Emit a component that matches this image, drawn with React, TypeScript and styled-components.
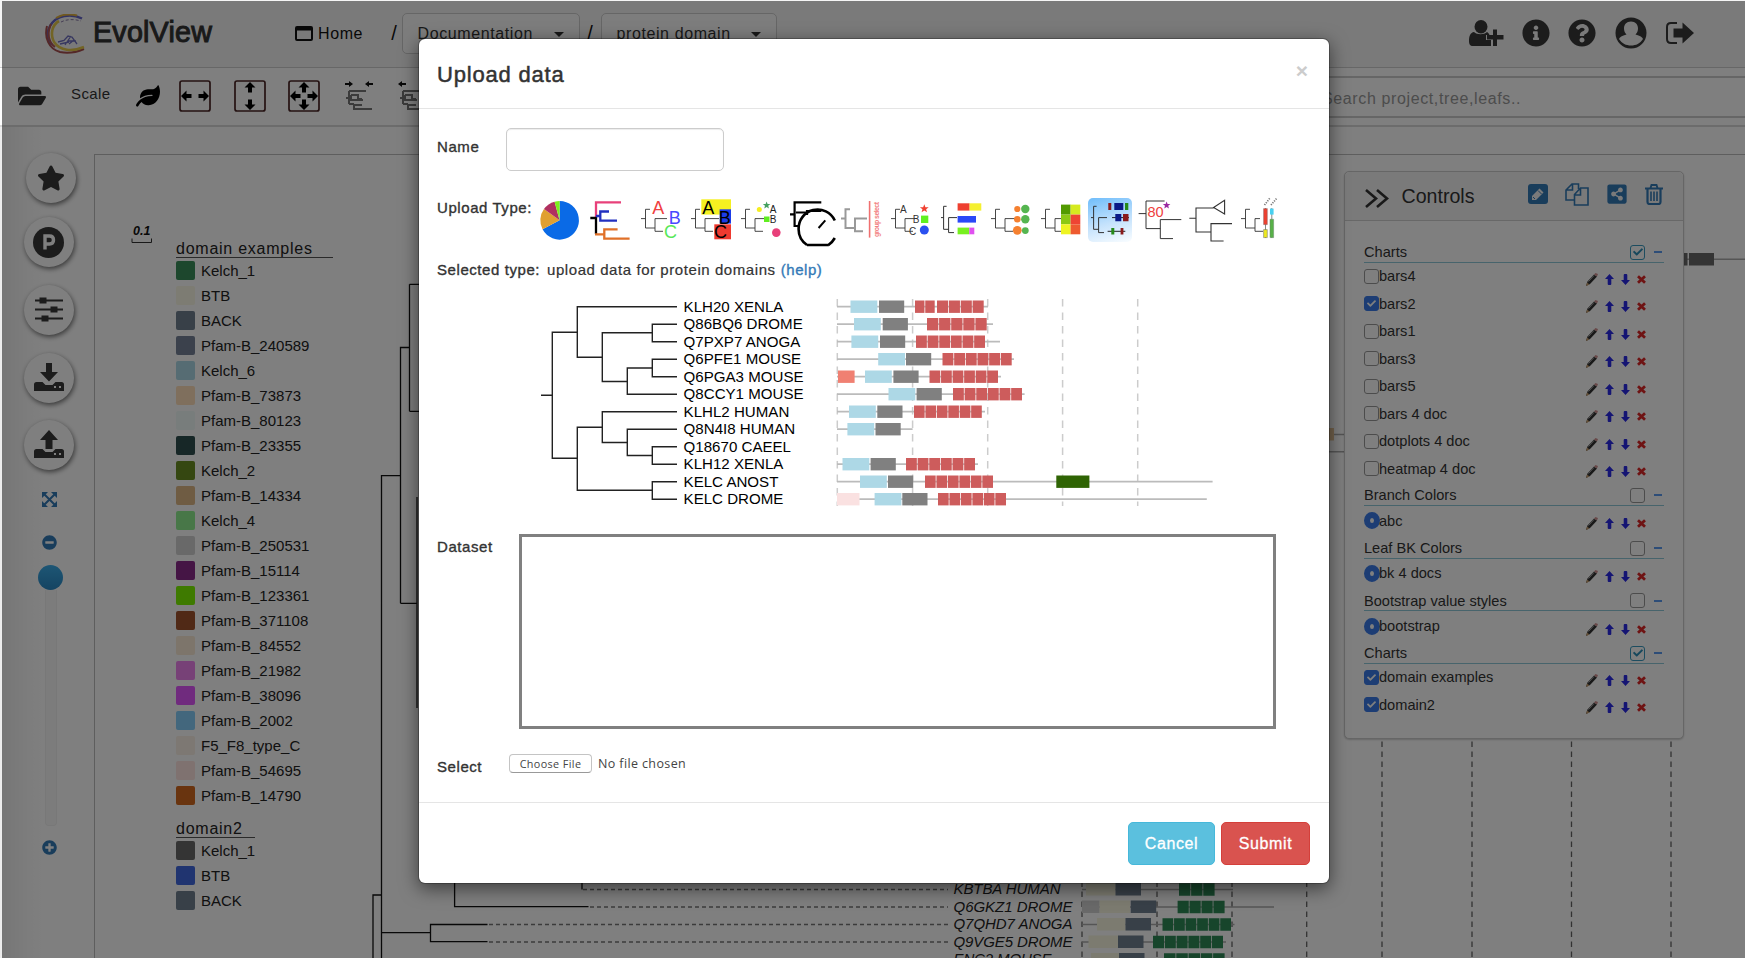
import React from "react";
import styled, { createGlobalStyle, css } from "styled-components";
import {
  FaCheck,
  FaFolderOpen,
  FaInfoCircle,
  FaLeaf,
  FaQuestionCircle,
  FaShareAltSquare,
  FaStar,
  FaMinusCircle,
  FaPlusCircle,
} from "react-icons/fa";

const GlobalStyle = createGlobalStyle`
  * { box-sizing: border-box; }
  body {
    margin: 0;
    background: #fff;
    color: #333;
    font-family: "Liberation Sans", Arial, Helvetica, sans-serif;
    overflow: hidden;
  }
  svg { display: block; flex: none; }
`;

/* ---------- page shell ---------- */

const Page = styled.div`
  position: relative;
  display: flex;
  flex-direction: column;
  width: 1745px;
  height: 958px;
  overflow: hidden;
`;

const Header = styled.header`
  display: flex;
  align-items: center;
  height: 68px;
  padding: 0 51px 0 44px;
  background: #f5f5f5;
  border-bottom: 1px solid #cfcfcf;
  letter-spacing: 0.6px;
  font-size: 16px;
`;

const Brand = styled.div`
  width: 202px;
  margin-left: 6px;
  font-size: 28.7px;
  letter-spacing: 0.2px;
  -webkit-text-stroke: 1px #333;
  padding-bottom: 2px;
`;

const HomeLink = styled.a`
  display: flex;
  align-items: center;
  gap: 5px;
  width: 91.5px;
  color: #111;
`;

const Slash = styled.span<{ $wide?: boolean }>`
  width: ${(p) => (p.$wide ? "15px" : "21px")};
  font-size: 20px;
  text-align: center;
  letter-spacing: 0;
  color: #111;
`;

const Crumb = styled.div<{ $width: number }>`
  display: flex;
  align-items: center;
  justify-content: space-between;
  width: ${(p) => p.$width}px;
  height: 41px;
  padding: 1px 15px 0 15px;
  border: 1px solid #ccc;
  border-radius: 5px;
  background: #fbfbfb;
`;

const Caret = styled.i`
  border: 5px solid transparent;
  border-top-color: #333;
  border-bottom: 0;
`;

const HeaderIcons = styled.div`
  display: flex;
  align-items: center;
  margin-left: auto;
  padding-bottom: 2px;
  color: #383838;
`;

const Gap = styled.span<{ $w: number }>`
  width: ${(p) => p.$w}px;
`;

const Toolbar = styled.div`
  display: flex;
  align-items: center;
  height: 59px;
  padding: 0 0 2px 18px;
  background: #fff;
  border-bottom: 2px solid #d8d8d8;
  color: #333;
`;

const ScaleLabel = styled.span`
  width: 65px;
  margin-left: 25px;
  padding-bottom: 4px;
  font-size: 15px;
  letter-spacing: 0.4px;
`;

const SearchBox = styled.div`
  display: flex;
  align-items: center;
  width: 450px;
  height: 42px;
  margin: 2px 0 0 auto;
  padding: 4px 0 0 25px;
  border: 2px solid #ccc;
  border-right: 0;
  color: #999;
  font-size: 16px;
  letter-spacing: 0.62px;
`;

const Workspace = styled.div`
  display: flex;
  flex: 1;
  min-height: 0;
`;

const Sidebar = styled.aside`
  display: flex;
  flex-direction: column;
  align-items: center;
  width: 94px;
  padding: 26px 0 0 3px;
  background: linear-gradient(90deg, #ececec, #fafafa 28px, #fff 45px);
  color: #337ab7;
`;

const RoundButton = styled.div<{ $shift?: number; $gap: number }>`
  display: flex;
  flex: none;
  align-items: center;
  justify-content: center;
  width: 50px;
  height: 50px;
  margin-bottom: ${(p) => p.$gap}px;
  margin-left: ${(p) => p.$shift || 0}px;
  border-radius: 50%;
  background: #fff;
  color: #383838;
  box-shadow: 1px 2px 5px rgba(0, 0, 0, 0.55);
`;

const ZoomControl = styled.div`
  display: flex;
  flex-direction: column;
  align-items: center;
  margin-left: 2px;
`;

const ZoomFit = styled.span`
  margin-bottom: 28px;
`;

const SliderHandle = styled.div`
  flex: none;
  width: 25px;
  height: 25px;
  margin: 15px 0 0 2px;
  border-radius: 50%;
  background: linear-gradient(#3badea, #2a88c4);
`;

const SliderTrack = styled.div`
  flex: none;
  width: 12px;
  height: 236px;
  margin: 0 0 14px 2px;
  border: 1px solid #f0f0f0;
  border-top: 0;
  border-radius: 0 0 4px 4px;
  background: #f9f9f9;
`;

const Canvas = styled.main`
  position: relative;
  flex: 1;
  margin-top: 27px;
  border-top: 1px solid #bdbdbd;
  border-left: 1px solid #bdbdbd;
`;

const CanvasDrawing = styled.svg`
  position: absolute;
  left: 0;
  top: 0;
`;

/* ---------- legend ---------- */

const Legend = styled.div`
  position: absolute;
  left: 81px;
  top: 83px;
  color: #222;
  font-size: 15px;
`;

const LegendTitle = styled.div<{ $width: number }>`
  width: ${(p) => p.$width}px;
  height: 20px;
  margin-bottom: 3px;
  border-bottom: 1px solid #555;
  font-size: 16px;
  line-height: 21px;
  letter-spacing: 0.75px;
`;

const LegendRow = styled.div`
  display: flex;
  align-items: center;
  gap: 6px;
  height: 19px;
  margin-bottom: 6px;
`;

const Swatch = styled.span<{ $color: string }>`
  width: 19px;
  height: 19px;
  border-radius: 2px;
  background: ${(p) => p.$color};
`;

const LegendGroup = styled.section`
  margin-bottom: 13px;
`;

const domainLegend: [string, string][] = [
  ["Kelch_1", "#3a8e5a"],
  ["BTB", "#fbf9e6"],
  ["BACK", "#708090"],
  ["Pfam-B_240589", "#778399"],
  ["Kelch_6", "#add8e6"],
  ["Pfam-B_73873", "#ffdfba"],
  ["Pfam-B_80123", "#f0fbf8"],
  ["Pfam-B_23355", "#2f4f4f"],
  ["Kelch_2", "#6b8e23"],
  ["Pfam-B_14334", "#deb887"],
  ["Kelch_4", "#90ee90"],
  ["Pfam-B_250531", "#d3d3d3"],
  ["Pfam-B_15114", "#8b2a8b"],
  ["Pfam-B_123361", "#7cf400"],
  ["Pfam-B_371108", "#a0522d"],
  ["Pfam-B_84552", "#faebd7"],
  ["Pfam-B_21982", "#ee82ee"],
  ["Pfam-B_38096", "#e056fd"],
  ["Pfam-B_2002", "#87cefa"],
  ["F5_F8_type_C", "#faf0e6"],
  ["Pfam-B_54695", "#ffe4e1"],
  ["Pfam-B_14790", "#d2691e"],
];

const domain2Legend: [string, string][] = [
  ["Kelch_1", "#696969"],
  ["BTB", "#4169e1"],
  ["BACK", "#708090"],
];

/* ---------- controls panel ---------- */

const Panel = styled.section`
  position: absolute;
  left: 1249px;
  top: 16px;
  width: 340px;
  height: 568px;
  border: 1px solid #ccc;
  border-radius: 5px;
  background: #fff;
  box-shadow: 0 1px 2px rgba(0, 0, 0, 0.2);
  color: #333;
`;

const PanelHead = styled.div`
  display: flex;
  align-items: center;
  height: 49px;
  padding: 0 20px 4px 20px;
  border-bottom: 1px solid #d0d0d0;
  border-radius: 5px 5px 0 0;
  background: #f5f5f5;
  font-size: 19.6px;

  & > svg {
    margin-top: 8px;
  }
`;

const PanelTitle = styled.span`
  flex: 1;
  margin-left: 12.5px;
  padding-top: 5px;
`;

const PanelIcons = styled.div`
  display: flex;
  align-items: center;
  gap: 17px;
  color: #337ab7;
`;

const PanelBody = styled.div`
  width: 300px;
  margin: 18.5px 0 0 19px;
  font-size: 14.6px;
`;

const GroupHead = styled.div`
  display: flex;
  align-items: center;
  height: 23.3px;
  padding-top: 3px;
  border-bottom: 1px solid #8fc8d8;
`;

const GroupName = styled.span`
  flex: 1;
`;

const Collapse = styled.i`
  width: 8px;
  height: 2px;
  margin: 0 2px 0 9px;
  background: #5b9bf0;
`;

const Box = styled.span<{ $on?: boolean; $outline?: boolean }>`
  display: inline-flex;
  align-items: center;
  justify-content: center;
  width: 15px;
  height: 15px;
  border: 1px solid #999;
  border-radius: 3px;
  background: #fff;
  color: #fff;
  ${(p) =>
    p.$on &&
    (p.$outline
      ? css`
          border-color: #3a9bc0;
          color: #2e8fb8;
        `
      : css`
          border-color: #3a7be8;
          background: #3a7be8;
        `)}
`;

const Radio = styled.span`
  width: 16px;
  height: 17px;
  margin-right: -1px;
  border: 6px solid #3a7be8;
  border-radius: 50%;
  background: #fff;
`;

const ItemRow = styled.div<{ $radio?: boolean }>`
  display: flex;
  align-items: center;
  height: ${(p) => (p.$radio ? "29.35px" : "27.5px")};
  padding-bottom: ${(p) => (p.$radio ? "0" : "1px")};
`;

const ItemName = styled.span`
  flex: 1;
`;

const ItemTools = styled.span`
  display: flex;
  align-items: center;
  gap: 7px;
  margin: 6px 18px 0 0;
`;

/* ---------- modal ---------- */

const Backdrop = styled.div`
  position: absolute;
  inset: 1px 0 0 2px;
  background: rgba(0, 0, 0, 0.5);
`;

const Modal = styled.div`
  position: absolute;
  left: 418px;
  top: 38px;
  display: flex;
  flex-direction: column;
  width: 912px;
  height: 846px;
  border: 1px solid rgba(0, 0, 0, 0.25);
  border-radius: 7px;
  background: #fff;
  background-clip: padding-box;
  box-shadow: 0 5px 18px rgba(0, 0, 0, 0.5);
  font-size: 15px;
  letter-spacing: 0.57px;
`;

const ModalHead = styled.div`
  display: flex;
  align-items: center;
  justify-content: space-between;
  height: 70px;
  padding: 2px 21px 0 18px;
  border-bottom: 1px solid #e5e5e5;
  font-size: 22px;
  letter-spacing: 0.8px;
  -webkit-text-stroke: 0.5px #333;
`;

const CloseMark = styled.span`
  padding-bottom: 7px;
  font-size: 21px;
  font-weight: bold;
  letter-spacing: 0;
  color: #ccc;
  -webkit-text-stroke: 0;
`;

const ModalBody = styled.div`
  flex: 1;
  padding: 19px 0 0 18px;
`;

const Field = styled.div<{ $height: number; $after: number }>`
  display: flex;
  height: ${(p) => p.$height}px;
  margin-bottom: ${(p) => p.$after}px;
`;

const Label = styled.label<{ $width: number; $top?: number }>`
  flex: none;
  width: ${(p) => p.$width}px;
  padding-top: ${(p) => p.$top || 0}px;
  line-height: 18px;
  white-space: nowrap;
  -webkit-text-stroke: 0.35px #333;
`;

const TextInput = styled.input`
  width: 218px;
  height: 43px;
  border: 1.5px solid #ccc;
  border-radius: 5px;
  box-shadow: inset 0 1px 1px rgba(0, 0, 0, 0.075);
`;

const TypeStrip = styled.div`
  display: flex;
  gap: 6px;
`;

const TypeIcon = styled.svg<{ $selected?: boolean }>`
  width: 44px;
  height: 44px;
  overflow: visible;
  border-radius: 5px;
  ${(p) =>
    p.$selected &&
    css`
      background: linear-gradient(165deg, #6fbdfb, #c4e2fc 55%, #fafdff);
    `}
`;

const HelpLink = styled.a`
  margin-left: 5px;
  color: #337ab7;
  -webkit-text-stroke: 0.35px #337ab7;
`;

const SelectedText = styled.span`
  line-height: 18px;
  -webkit-text-stroke: 0.2px #333;
`;

const DataArea = styled.textarea`
  width: 757px;
  height: 195px;
  border: 3.5px solid #808080;
  outline: 0;
  resize: none;
`;

const FilePicker = styled.div`
  display: flex;
  align-items: center;
  gap: 6px;
  height: 19px;
  color: #444;
  font-family: "Open Sans", sans-serif;
  font-size: 12.5px;
  letter-spacing: 0.38px;
`;

const FileButton = styled.span`
  width: 83px;
  height: 19px;
  border: 1px solid #c4c4c4;
  border-bottom-color: #999;
  border-radius: 4px;
  font-size: 10.8px;
  line-height: 17px;
  text-align: center;
`;

const ModalFoot = styled.div`
  display: flex;
  justify-content: flex-end;
  gap: 6px;
  height: 81px;
  padding: 19px 19px 0 0;
  border-top: 1px solid #e5e5e5;
`;

const Button = styled.button<{ $kind: "info" | "danger" }>`
  width: ${(p) => (p.$kind === "info" ? 87 : 89)}px;
  height: 43px;
  padding: 0;
  border: 1px solid ${(p) => (p.$kind === "info" ? "#46b8da" : "#d43f3a")};
  border-radius: 5px;
  background: ${(p) => (p.$kind === "info" ? "#5bc0de" : "#d9534f")};
  color: #fff;
  font: 16px "Liberation Sans", Arial, sans-serif;
  letter-spacing: 0.6px;
  -webkit-text-stroke: 0.3px #fff;
`;

/* ---------- drawings ---------- */

const Logo = () => (
  <svg width="43" height="40" viewBox="0 0 43 40" fill="none">
    <path d="M38 4.500C27-1 12 1 6 12C2 19 3 26 8 31" stroke="#6464c8" strokeWidth="2.400" />
    <path d="M33 1.500C25-0.500 17 1 12 4" stroke="#e0b040" strokeWidth="2" />
    <path d="M3 12C0 24 5 35 16 38C25 40 33 38 40 35" stroke="#a85050" strokeWidth="2" />
    <path d="M40 33C28 38 16 37 10 28C6 20 8 11 15 7" stroke="#e5c84a" strokeWidth="2.600" />
    <path d="M7 10C3 18 4 28 11 33" stroke="#b05858" strokeWidth="2" />
    <path d="M17 8C23 5 30 5 37 7" stroke="#8a7aa8" strokeWidth="1" strokeDasharray="3 2" />
    <path d="M14 28L20 26.500L24 22L28 23L33 30M16 30L25 28M25 30L30 26M21 31L27 22M24 27H32" stroke="#7070c0" strokeWidth="1.300" />
  </svg>
);

const UserPlus = () => (
  <svg width="35" height="26" viewBox="0 0 35 26" fill="currentColor">
    <ellipse cx="12" cy="6.800" rx="6.500" ry="6.800" />
    <path d="M5 12C8 15 15 15 18 12C19 12.500 20 13.500 20.500 15H17V20H22V26H4C1 26 0 24 0 21C0 16 1.500 12.500 5 12Z" />
    <path d="M24 9.500H28V15H34.500V19.500H28V26H24V19.500H18V15H24Z" />
  </svg>
);

const Account = () => (
  <svg width="32" height="32" viewBox="0 0 32 32">
    <circle cx="16" cy="16" r="15.500" fill="currentColor" />
    <path d="M16 4.500C11.500 4.500 9 7.500 9 11.500C9 14 10 16 11.500 17.500C7 18.500 4.500 20.500 4 22C7 26.500 11 28.500 16 28.500C21 28.500 25 26.500 28 22C27.500 20.500 25 18.500 20.500 17.500C22 16 23 14 23 11.500C23 7.500 20.500 4.500 16 4.500Z" fill="#f5f5f5" />
  </svg>
);

const SignOut = () => (
  <svg width="28" height="22" viewBox="0 0 28 22">
    <path d="M11 1H5C2.500 1 1 2.500 1 5V17C1 19.500 2.500 21 5 21H11" fill="none" stroke="currentColor" strokeWidth="2" />
    <path d="M7.500 6.500H16.500V0.500L28 11L16.500 21.500V15.500H7.500Z" fill="currentColor" />
  </svg>
);

const WindowIcon = () => (
  <svg width="18" height="15" viewBox="0 0 18 15">
    <path d="M2 0H16Q18 0 18 2V13Q18 15 16 15H2Q0 15 0 13V2Q0 0 2 0ZM2 4.500V13H16V4.500Z" fill="#111" fillRule="evenodd" />
  </svg>
);

const arrowPair = "M1.500 15.500L7 10V13.500H12V17.500H7V21ZM29.500 15.500L24 10V13.500H19V17.500H24V21Z";

const ScaleBox = ({ mode }: { mode: "h" | "v" | "all" }) => (
  <svg width="32" height="32" viewBox="0 0 32 32">
    <rect x="1" y="1" width="30" height="30" rx="2" fill="none" stroke="#4a2424" strokeWidth="1.700" />
    <g fill="#000" transform="translate(0.500 0.500)">
      {mode !== "v" && <path d={arrowPair} />}
      {mode !== "h" && <path d={arrowPair} transform="rotate(90 15.500 15.500)" />}
    </g>
  </svg>
);

const TreeScale = ({ flip }: { flip?: boolean }) => (
  <svg width="30" height="30" viewBox="0 0 30 30">
    <path
      d={flip ? "M0 3L4 0V2H8V4H4V6ZM22 3L26 0V2H30V4H26V6Z" : "M9 3L5 0V2H1V4H5V6ZM21 3L25 0V2H29V4H25V6Z"}
      fill="#111"
    />
    <path d="M2 17H5M5 10V23M5 10H22M5 23H10M7 14H14V18H18M7 14V19H19M10 23V28H28M10 24H18" fill="none" stroke="#777" strokeWidth="2" />
  </svg>
);

const ParkingIcon = () => (
  <svg width="31" height="31" viewBox="0 0 31 31">
    <circle cx="15.500" cy="15.500" r="15.500" fill="currentColor" />
    <path d="M12 22.500V9H16.500Q20.500 9 20.500 13Q20.500 17 16.500 17H12" fill="none" stroke="#fff" strokeWidth="3.400" />
  </svg>
);

const SlidersIcon = () => (
  <svg width="28" height="25" viewBox="0 0 28 25">
    <path d="M0 3.500H28M0 12.500H28M0 21.500H28" stroke="currentColor" strokeWidth="2" />
    <path d="M4.500 0.500h7v6h-7zM15.500 9.500h7v6h-7zM6.500 18.500h7v6h-7z" fill="currentColor" />
  </svg>
);

const DriveIcon = ({ up }: { up?: boolean }) => (
  <svg width="30" height="29" viewBox="0 0 30 29" fill="currentColor">
    <path d={up ? "M15 0L24 10H18.500V19H11.500V10H6Z" : "M12 0H18V9H24L15 18.500L6 9H12Z"} />
    <path d="M2.500 19H8.500L11.500 22H18.500L21.500 19H27.500Q30 19 30 21.500V28H0V21.500Q0 19 2.500 19Z" />
    <path d="M20 23h2v2h-2zM25 23h2v2h-2z" fill="#fff" />
  </svg>
);

const ExpandIcon = () => (
  <svg width="15" height="15" viewBox="0 0 15 15">
    <path d="M0 0H6L0 6ZM9 0H15V6ZM15 9V15H9ZM0 9L6 15H0Z" fill="currentColor" />
    <path d="M2 2L13 13M13 2L2 13" stroke="currentColor" strokeWidth="2" />
  </svg>
);

const DoubleChevron = () => (
  <svg width="24" height="19" viewBox="0 0 24 19" fill="none" stroke="#333" strokeWidth="2.600">
    <path d="M1 1L11 9.500L1 18M12 1L22 9.500L12 18" />
  </svg>
);

const PencilSquare = () => (
  <svg width="20" height="20" viewBox="0 0 20 20">
    <rect width="20" height="20" rx="3" fill="currentColor" />
    <path d="M4 12L11.500 4.500L15.500 8.500L8 16H4Z" fill="#f5f5f5" />
    <path d="M10 6.500L13.500 10M5 13L7 15" stroke="currentColor" strokeWidth="1" />
  </svg>
);

const FilesIcon = () => (
  <svg width="24" height="23" viewBox="0 0 24 23" fill="none" stroke="currentColor" strokeWidth="1.600">
    <path d="M9.500 17H1V7L7 1H13.500V6M7.500 1V7H1" />
    <path d="M9.500 22V11.500L15.500 5H23V22ZM15.500 5V12H9.500" />
  </svg>
);

const TrashIcon = () => (
  <svg width="18" height="21" viewBox="0 0 18 21" fill="none" stroke="currentColor">
    <path d="M0 4.500H18M5.500 4L6.500 1H11.500L12.500 4" strokeWidth="1.900" />
    <path d="M2.500 5V18Q2.500 20 4.500 20H13.500Q15.500 20 15.500 18V5" strokeWidth="2.200" />
    <path d="M6 7.500V17M9 7.500V17M12 7.500V17" strokeWidth="1.600" />
  </svg>
);

const PenIcon = () => (
  <svg width="12" height="13" viewBox="0 0 12 13">
    <path d="M0 13L1.500 8.500L8 1.500L11 3.500L4 11Z" fill="#333" />
    <path d="M2.500 8.500L8 2.500" stroke="#aaa" strokeWidth="1" />
    <path d="M8 1.500L9.500 0L12 1L11 3.500Z" fill="#d09090" />
    <path d="M0 13L1 9.500L3.500 11.500Z" fill="#c9a070" />
  </svg>
);

const MoveIcon = ({ down }: { down?: boolean }) => (
  <svg width="9" height="11" viewBox="0 0 9 11">
    <path
      d="M4.500 0L9 5H6.300V10Q6.300 11 5.300 11H3.700Q2.700 11 2.700 10V5H0Z"
      fill="#2a2ae6"
      transform={down ? "rotate(180 4.500 5.500)" : undefined}
    />
  </svg>
);

const RemoveIcon = () => (
  <svg width="9" height="9" viewBox="0 0 9 9">
    <path d="M1 1.200L8 7.800M8 1.200L1 7.800" stroke="#dc2626" strokeWidth="2.800" />
  </svg>
);

/* Row of protein blocks drawn on the main canvas. */
interface CanvasRow {
  label: string;
  y: number;
  from: number;
  end: number;
  pale: [number, number];
  slate: number;
  green: [number, number, number];
  grey?: [number, number];
}

const canvasRows: CanvasRow[] = [
  { label: "KBTBA HUMAN", y: 889.5, from: 583, end: 1233, pale: [1086, 1115.5], slate: 1115.5, green: [1179, 1214.6, 3] },
  { label: "Q6GKZ1 DROME", y: 907, from: 590, end: 1274, pale: [1099.6, 1130], slate: 1130.7, green: [1177.6, 1224.6, 4], grey: [1082, 1099.6] },
  { label: "Q7QHD7 ANOGA", y: 924.5, from: 489, end: 1234.5, pale: [1097, 1125.5], slate: 1125.5, green: [1162.5, 1231, 6] },
  { label: "Q9VGE5 DROME", y: 942, from: 489, end: 1226, pale: [1088.5, 1118], slate: 1118, green: [1153, 1223, 6] },
  { label: "ENC2 MOUSE", y: 959.5, from: 489, end: 1228, pale: [1091, 1119], slate: 1119, green: [1164, 1224.6, 5] },
];

const Blocks = ({ from, to, n, y, h, color }: { from: number; to: number; n: number; y: number; h: number; color: string }) => {
  const gap = 0.8;
  const step = (to - from + gap) / n;
  return (
    <>
      {Array.from({ length: n }, (_, i) => (
        <rect key={i} x={from + i * step} y={y - h / 2} width={step - gap} height={h} fill={color} />
      ))}
    </>
  );
};

const TreeCanvas = () => (
  <CanvasDrawing width="1650" height="803" viewBox="95 155 1650 803">
    <text x="133" y="235" fontSize="12.500" fontWeight="bold" fontStyle="italic" fill="#111">0.1</text>
    <path d="M132 238.500V242.500H151.500V238.500" fill="none" stroke="#333" />
    <path
      d="M381.500 958V475.700H400.500M400.500 603.300V347.500H409.500M409.500 284.300V411.300M409.500 284.300H430M409.500 411.300H430M400.500 603.300H417M417 497V708M381.500 932.700H430.500M487.500 924.500H430.500V941.700H487.500M373 958V895H381.500M454.600 870V906.700H588.500M582 870V889.500"
      fill="none"
      stroke="#111"
      strokeWidth="1.300"
    />
    {[1082, 1157, 1232, 1306.7, 1382, 1472, 1571.5, 1671].map((x) => (
      <path key={x} d={`M${x} 741.500V958`} stroke="#666" strokeWidth="1.300" strokeDasharray="5.500 4.500" />
    ))}
    {canvasRows.map((r) => (
      <g key={r.label}>
        <path d={`M${r.from} ${r.y}H948`} stroke="#777" strokeWidth="1.500" strokeDasharray="4 3" />
        <text x="953.500" y={r.y + 4.5} fontSize="15" fontStyle="italic" fill="#222" textLength={r.label === "KBTBA HUMAN" ? 107 : r.label === "ENC2 MOUSE" ? 98 : 119}>
          {r.label}
        </text>
        <path d={`M1082 ${r.y}H${r.end}`} stroke="#aaa" strokeWidth="1.500" />
        {r.grey && <rect x={r.grey[0]} y={r.y - 6.5} width={r.grey[1] - r.grey[0]} height="12.500" fill="#d3d3d3" />}
        <rect x={r.pale[0]} y={r.y - 6.5} width={r.pale[1] - r.pale[0]} height="12.500" fill="#f8f7e0" />
        <rect x={r.slate} y={r.y - 6.5} width="25.500" height="12.500" fill="#708090" />
        <Blocks from={r.green[0]} to={r.green[1]} n={r.green[2]} y={r.y} h={12.5} color="#2e8b57" />
      </g>
    ))}
    <path d="M1320 434.500H1345M1320 451.700H1345M1680 259.300H1745" stroke="#aaa" strokeWidth="1.500" />
    <rect x="1320" y="428" width="14" height="12.500" fill="#e8c79a" />
    <rect x="1670" y="253" width="17.500" height="12.500" fill="#696969" />
    <rect x="1689" y="253" width="25" height="12.500" fill="#696969" />
  </CanvasDrawing>
);

/* ---------- upload type thumbnails ---------- */

const Clado = ({ to = 27, color = "#333", w = 0.9 }: { to?: number; color?: string; w?: number }) => (
  <path d={`M3 20.600H7.500M12 11.300H7.500V30H17M${to} 20.600H17V33.300H25`} fill="none" stroke={color} strokeWidth={w} />
);

const CladoTall = () => (
  <path d="M3 19.600H5.600M8.600 8.300H5.600V31.300H10.600M19 19.600H10.600V34.600H16" fill="none" stroke="#333" strokeWidth="1" />
);

const starPath = "M0 -1L0.260 -0.330L1 -0.310L0.420 0.130L0.620 0.810L0 0.420L-0.620 0.810L-0.420 0.130L-1 -0.310L-0.260 -0.330Z";
const Star = ({ x, y, r, color }: { x: number; y: number; r: number; color: string }) => (
  <path d={starPath} transform={`translate(${x} ${y}) scale(${r})`} fill={color} />
);

const Letters = ({ colors, size, pos }: { colors: string[]; size: number; pos: number[][] }) => (
  <g fontSize={size} textAnchor="middle" letterSpacing="0">
    {pos.map(([x, y], i) => (
      <text key={i} x={x} y={y} fill={colors[i]}>
        {"ABC"[i]}
      </text>
    ))}
  </g>
);

const slice = (a: number, b: number) => {
  const p = (d: number) => {
    const t = ((d - 90) * Math.PI) / 180;
    return `${21.6 + 19.3 * Math.cos(t)} ${22.3 + 19.3 * Math.sin(t)}`;
  };
  return `M21.600 22.300L${p(a)}A19.300 19.300 0 ${b - a > 180 ? 1 : 0} 1 ${p(b)}Z`;
};

const bigLetters = [[20.3, 15.5], [36.8, 25.5], [32.5, 39.8]];

const typeIcons: React.ReactNode[] = [
  <>
    <path d={slice(0, 242)} fill="#0a6ae6" />
    <path d={slice(242, 306)} fill="#e0a030" />
    <path d={slice(306, 345)} fill="#b03060" />
    <path d={slice(345, 360)} fill="#7cf01a" />
  </>,
  <g fill="none" strokeWidth="2.300">
    <path d="M8 20V4.300H33" stroke="#e8407a" />
    <path d="M2.300 20H8V36" stroke="#000" />
    <path d="M8 18H12.300M21 13.500H12.300V22.600H29" stroke="#2230c0" />
    <path d="M7 36.300H16.300M29.600 31.300H16.300V40.600H41.600" stroke="#e07028" />
  </g>,
  <>
    <Clado to={29} />
    <Letters colors={["#f04040", "#4848ff", "#58e858"]} size={18} pos={bigLetters} />
  </>,
  <>
    <path d="M13.300 1.300H43V16.600H13.300Z" fill="#f5f020" />
    <path d="M31.600 11.300H43V25.600H31.600Z" fill="#1c3ce8" />
    <path d="M26.300 26.300H43V41.300H26.300Z" fill="#ee3a30" />
    <Clado to={31} />
    <Letters colors={["#000", "#000", "#000"]} size={18} pos={bigLetters} />
  </>,
  <>
    <Clado />
    <Star x={28.6} y={7.3} r={3.8} color="#45a060" />
    <circle cx="21.300" cy="11.600" r="2.500" fill="#f5ee20" />
    <path d="M26 18.500H31.500V24H26Z" fill="#60ee20" />
    <circle cx="38.300" cy="34.600" r="4.300" fill="#e8407a" />
    <Letters colors={["#222", "#222"]} size={10} pos={[[35, 15.3], [35, 25]]} />
  </>,
  <g fill="none" stroke="#000">
    <path d="M33.300 4.300H6.600V28H12M2 16.300H6.600M8 14.500H18M33.300 13H19V17" strokeWidth="2.200" />
    <path d="M46.800 22.500A19 19 0 0 0 10.600 31.300A19 19 0 0 0 19 47M40 47.300Q44 45 46.800 40M19 47H40" strokeWidth="2.600" />
    <path d="M30.600 30L37.300 22.300" strokeWidth="2" />
  </g>,
  <>
    <Clado to={29} color="#999" w={2} />
    <path d="M31.600 3V39.600" stroke="#f07070" strokeWidth="1.600" />
    <text x="0" y="0" fontSize="7" fontWeight="bold" textLength="35" fill="#f28080" transform="translate(41.200 39) rotate(-90)" letterSpacing="0">group select</text>
  </>,
  <>
    <Clado />
    <Letters colors={["#333", "#333", "#333"]} size={10} pos={[[15.3, 15], [28, 25], [24.6, 37.3]]} />
    <Star x={36.3} y={10.6} r={4.4} color="#f04030" />
    <path d="M33 17.600H40.300V25H33Z" fill="#60f020" />
    <circle cx="36.300" cy="32" r="4.500" fill="#2a50f0" />
  </>,
  <>
    <CladoTall />
    <path d="M19.600 5.300H31.600V12.600H19.600Z" fill="#ee4030" />
    <path d="M31.600 5.300H43.300V12.600H31.600Z" fill="#f5f030" />
    <path d="M19.600 18H38V24.600H19.600Z" fill="#2a48f8" />
    <path d="M19.600 29.600H31.300V36.300H19.600Z" fill="#78f020" />
    <path d="M31.300 29.600H36.300V36.300H31.300Z" fill="#e050f0" />
  </>,
  <>
    <Clado />
    <g fill="#f58030">
      <circle cx="29.300" cy="11" r="3.100" />
      <circle cx="29.300" cy="21.300" r="3.300" />
      <circle cx="29.300" cy="32.300" r="4.400" />
    </g>
    <g fill="#55b550">
      <circle cx="37.300" cy="11" r="4.200" />
      <circle cx="37.300" cy="21.300" r="4.200" />
      <circle cx="37.300" cy="32.600" r="3.400" />
    </g>
  </>,
  <>
    <Clado />
    <path d="M23 6.600H32.600V16.600H23Z" fill="#529a00" />
    <path d="M32.600 6.600H42.300V16.600H32.600Z" fill="#d5ea20" />
    <path d="M23 16.600H32.600V26.300H23Z" fill="#8cc814" />
    <path d="M32.600 16.600H42.300V26.300H32.600Z" fill="#ee4433" />
    <path d="M23 26.300H32.600V36.300H23Z" fill="#eef422" />
    <path d="M32.600 26.300H42.300V36.300H32.600Z" fill="#ee5a30" />
  </>,
  <>
    <CladoTall />
    <path d="M24 19.600H41M19.600 33.300H37.300" stroke="#222" />
    <path d="M20.300 5H23.300V12H20.300ZM35 16H40.500V23.300H35ZM32.600 30H35.400V36.500H32.600Z" fill="#8b1a1a" />
    <path d="M26.300 5H35.300V12H26.300ZM27.300 16H33.300V23.300H27.300Z" fill="#0a1a88" />
    <path d="M37 5H40.300V12H37ZM23.300 30H26.300V36.500H23.300Z" fill="#268a18" />
  </>,
  <>
    <path d="M0.600 15.600H8M26.600 3H8V30.600H22.300M43.300 21.600H22.300V40.600H35" fill="none" stroke="#333" strokeWidth="1" />
    <text x="17.600" y="19" fontSize="14.500" textAnchor="middle" fill="#ee4040" letterSpacing="0">80</text>
    <Star x={28.6} y={7.3} r={3.8} color="#9a2aa0" />
  </>,
  <path d="M1.300 20.300H8M25.600 10H8V34H23M44 25.600H23V43H35.600M25.600 9.500L36.600 2.300V16Z" fill="none" stroke="#333" strokeWidth="1.100" />,
  <>
    <Clado to={22} />
    <path d="M27.500 10V40M33.800 10V40" stroke="#888" />
    <path d="M25.600 10.600H29.300V26.600H25.600Z" fill="#ee4030" stroke="#866" strokeWidth="0.500" />
    <path d="M25.600 31.600H29.300V39.600H25.600Z" fill="#eeea20" stroke="#666" strokeWidth="0.500" />
    <path d="M32 10.600H35.600V16.600H32Z" fill="#48d0f0" />
    <path d="M32 21.300H35.600V39.600H32Z" fill="#58b048" stroke="#686" strokeWidth="0.500" />
    <path d="M26.500 7L32 0M33 7L39 0" stroke="#777" strokeWidth="1.700" strokeDasharray="1.200 1.200" />
  </>,
];

/* ---------- protein domain preview ---------- */

interface PreviewRow {
  label: string;
  end?: number;
  blue?: number;
  grey?: number;
  red?: [number, number, number];
  extra?: [number, number, string];
}

const previewRows: PreviewRow[] = [
  { label: "KLH20 XENLA", end: 458, blue: 320.5, grey: 349 },
  { label: "Q86BQ6 DROME", end: 463, blue: 324, grey: 352.7, red: [397, 456.7, 5] },
  { label: "Q7PXP7 ANOGA", end: 470, blue: 321.4, grey: 350, red: [386, 455, 6] },
  { label: "Q6PFE1 MOUSE", end: 484, blue: 348.2, grey: 376, red: [412.5, 481.7, 6] },
  { label: "Q6PGA3 MOUSE", end: 471, blue: 335, grey: 363.4, red: [399.5, 468, 6], extra: [308, 324.6, "#f08072"] },
  { label: "Q8CCY1 MOUSE", end: 494.6, blue: 358.5, grey: 386.6, red: [423, 492, 6] },
  { label: "KLHL2 HUMAN", end: 455, blue: 319, grey: 347.3, red: [384, 451.8, 6] },
  { label: "Q8N4I8 HUMAN", end: 382.6, blue: 317.4, grey: 345.5 },
  { label: "Q18670 CAEEL" },
  { label: "KLH12 XENLA", end: 448, blue: 312.5, grey: 340.6, red: [376, 445, 6] },
  { label: "KELC ANOST", end: 682.6, blue: 330, grey: 358, red: [395, 463, 6], extra: [526.3, 559.4, "#2f6404"] },
  { label: "KELC DROME", end: 676.8, blue: 344.6, grey: 372.3, red: [408, 476, 6], extra: [307, 329.5, "#fae1e1"] },
];

const PreviewSvg = styled.svg`
  margin: 0 0 20px 93px;
  letter-spacing: 0;
`;

const DomainPreview = () => (
  <PreviewSvg width="700" height="224" viewBox="0 0 700 224">
    <path
      d="M11 105.200H22.300M47.300 42.200H22.300V168.200H47.300M147 16.700H47.300V67.200H72.300M122.300 42.700H72.300V91.500H97.300M147 34.200H122.300V51.700H147M122.300 78H97.300V104.200H147M147 69.200H122.300V86.700H147M72.300 137.300H47.300V200.300H122.300M147 121.700H72.300V152.500H97.300M147 139.200H97.300V165.500H122.300M147 156.700H122.300V174.200H147M147 191.700H122.300V209.200H147"
      fill="none"
      stroke="#222"
      strokeWidth="1.400"
    />
    {[307.3, 382.6, 457.7, 532.6, 607.7].map((x) => (
      <path key={x} d={`M${x} 9V216`} stroke="#ccc" strokeWidth="1.500" strokeDasharray="7.500 6" />
    ))}
    {previewRows.map((r, i) => {
      const y = 16.7 + 17.5 * i;
      return (
        <g key={r.label}>
          <text x="153.600" y={y + 5.2} fontSize="15.100" fill="#000">{r.label}</text>
          {r.end && <path d={`M307 ${y}H${r.end}`} stroke="#bbb" strokeWidth="1.800" />}
          {r.blue && <rect x={r.blue} y={y - 6.2} width="26.800" height="12.400" fill="#add8e6" />}
          {r.grey && <rect x={r.grey} y={y - 6.2} width="25.200" height="12.400" fill="#808080" />}
          {r.red && <Blocks from={r.red[0]} to={r.red[1]} n={r.red[2]} y={y} h={12.4} color="#cd5c5c" />}
          {i === 0 && (
            <>
              <Blocks from={385} to={404.7} n={2} y={y} h={12.4} color="#cd5c5c" />
              <Blocks from={407} to={453.7} n={4} y={y} h={12.4} color="#cd5c5c" />
            </>
          )}
          {r.extra && <rect x={r.extra[0]} y={y - 6.2} width={r.extra[1] - r.extra[0]} height="12.400" fill={r.extra[2]} />}
        </g>
      );
    })}
  </PreviewSvg>
);

/* ---------- assembled parts ---------- */

const LegendBlock = ({ title, width, rows }: { title: string; width: number; rows: [string, string][] }) => (
  <LegendGroup>
    <LegendTitle $width={width}>{title}</LegendTitle>
    {rows.map(([name, color]) => (
      <LegendRow key={name}>
        <Swatch $color={color} />
        {name}
      </LegendRow>
    ))}
  </LegendGroup>
);

interface Group {
  name: string;
  on?: boolean;
  radio?: boolean;
  items: { name: string; on?: boolean }[];
}

const groups: Group[] = [
  {
    name: "Charts",
    on: true,
    items: [
      { name: "bars4" },
      { name: "bars2", on: true },
      { name: "bars1" },
      { name: "bars3" },
      { name: "bars5" },
      { name: "bars 4 doc" },
      { name: "dotplots 4 doc" },
      { name: "heatmap 4 doc" },
    ],
  },
  { name: "Branch Colors", radio: true, items: [{ name: "abc" }] },
  { name: "Leaf BK Colors", radio: true, items: [{ name: "bk 4 docs" }] },
  { name: "Bootstrap value styles", radio: true, items: [{ name: "bootstrap" }] },
  { name: "Charts", on: true, items: [{ name: "domain examples", on: true }, { name: "domain2", on: true }] },
];

const ControlsPanel = () => (
  <Panel>
    <PanelHead>
      <DoubleChevron />
      <PanelTitle>Controls</PanelTitle>
      <PanelIcons>
        <PencilSquare />
        <FilesIcon />
        <FaShareAltSquare size={22} />
        <TrashIcon />
      </PanelIcons>
    </PanelHead>
    <PanelBody>
      {groups.map((g, i) => (
        <React.Fragment key={i}>
          <GroupHead>
            <GroupName>{g.name}</GroupName>
            <Box $on={g.on} $outline>{g.on && <FaCheck size={10} />}</Box>
            <Collapse />
          </GroupHead>
          {g.items.map((item) => (
            <ItemRow key={item.name} $radio={g.radio}>
              {g.radio ? <Radio /> : <Box $on={item.on}>{item.on && <FaCheck size={9} />}</Box>}
              <ItemName>{item.name}</ItemName>
              <ItemTools>
                <PenIcon />
                <MoveIcon />
                <MoveIcon down />
                <RemoveIcon />
              </ItemTools>
            </ItemRow>
          ))}
        </React.Fragment>
      ))}
    </PanelBody>
  </Panel>
);

const UploadModal = () => (
  <Modal>
    <ModalHead>
      Upload data
      <CloseMark>×</CloseMark>
    </ModalHead>
    <ModalBody>
      <Field $height={43} $after={27}>
        <Label $width={69} $top={10}>Name</Label>
        <TextInput />
      </Field>
      <Field $height={44} $after={19}>
        <Label $width={101} $top={1}>Upload Type:</Label>
        <TypeStrip>
          {typeIcons.map((icon, i) => (
            <TypeIcon key={i} viewBox="0 0 44 44" $selected={i === 11}>
              {icon}
            </TypeIcon>
          ))}
        </TypeStrip>
      </Field>
      <Field $height={18} $after={11}>
        <Label $width={110}>Selected type:</Label>
        <SelectedText>
          upload data for protein domains
          <HelpLink>(help)</HelpLink>
        </SelectedText>
      </Field>
      <DomainPreview />
      <Field $height={195} $after={25}>
        <Label $width={82} $top={4}>Dataset</Label>
        <DataArea />
      </Field>
      <Field $height={19} $after={0}>
        <Label $width={72} $top={4}>Select</Label>
        <FilePicker>
          <FileButton>Choose File</FileButton>
          No file chosen
        </FilePicker>
      </Field>
    </ModalBody>
    <ModalFoot>
      <Button $kind="info">Cancel</Button>
      <Button $kind="danger">Submit</Button>
    </ModalFoot>
  </Modal>
);

export default function App() {
  return (
    <>
      <GlobalStyle />
      <Page>
        <Header>
          <Logo />
          <Brand>EvolView</Brand>
          <HomeLink>
            <WindowIcon />
            Home
          </HomeLink>
          <Slash $wide>/</Slash>
          <Crumb $width={178}>
            Documentation <Caret />
          </Crumb>
          <Slash>/</Slash>
          <Crumb $width={176}>
            protein domain <Caret />
          </Crumb>
          <HeaderIcons>
            <UserPlus />
            <Gap $w={18} />
            <FaInfoCircle size={28} />
            <Gap $w={18} />
            <FaQuestionCircle size={28} />
            <Gap $w={19} />
            <Account />
            <Gap $w={19} />
            <SignOut />
          </HeaderIcons>
        </Header>
        <Toolbar>
          <FaFolderOpen size={28} />
          <ScaleLabel>Scale</ScaleLabel>
          <FaLeaf size={24} color="#000" />
          <Gap $w={19} />
          <ScaleBox mode="h" />
          <Gap $w={23} />
          <ScaleBox mode="v" />
          <Gap $w={22} />
          <ScaleBox mode="all" />
          <Gap $w={24} />
          <TreeScale />
          <Gap $w={24} />
          <TreeScale flip />
          <SearchBox>Search project,tree,leafs..</SearchBox>
        </Toolbar>
        <Workspace>
          <Sidebar>
            <RoundButton $shift={5} $gap={14}>
              <FaStar size={28} />
            </RoundButton>
            <RoundButton $gap={17.5}>
              <ParkingIcon />
            </RoundButton>
            <RoundButton $gap={18}>
              <SlidersIcon />
            </RoundButton>
            <RoundButton $gap={17}>
              <DriveIcon />
            </RoundButton>
            <RoundButton $gap={22}>
              <DriveIcon up />
            </RoundButton>
            <ZoomControl>
              <ZoomFit>
                <ExpandIcon />
              </ZoomFit>
              <FaMinusCircle size={15} />
              <SliderHandle />
              <SliderTrack />
              <FaPlusCircle size={15} />
            </ZoomControl>
          </Sidebar>
          <Canvas>
            <TreeCanvas />
            <Legend>
              <LegendBlock title="domain examples" width={157} rows={domainLegend} />
              <LegendBlock title="domain2" width={79} rows={domain2Legend} />
            </Legend>
            <ControlsPanel />
          </Canvas>
        </Workspace>
        <Backdrop />
        <UploadModal />
      </Page>
    </>
  );
}
